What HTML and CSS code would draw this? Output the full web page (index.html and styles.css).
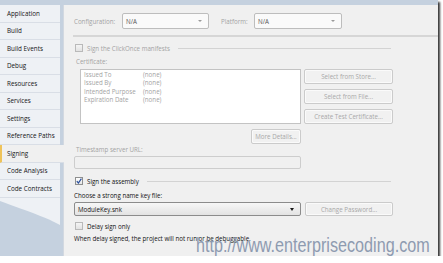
FILE: index.html
```html
<!DOCTYPE html>
<html lang="en">
<head>
    <meta charset="UTF-8">
    <title>Project Properties - Signing</title>
    <link rel="stylesheet" href="styles.css">
</head>
<body>
    <div class="shot">
        <div class="top-band"></div>
        <div class="body-row">
            <nav class="tabs">
                <div class="tab">Application</div>
                <div class="tab">Build</div>
                <div class="tab">Build Events</div>
                <div class="tab">Debug</div>
                <div class="tab">Resources</div>
                <div class="tab">Services</div>
                <div class="tab">Settings</div>
                <div class="tab">Reference Paths</div>
                <div class="tab selected">Signing</div>
                <div class="tab">Code Analysis</div>
                <div class="tab">Code Contracts</div>
                <svg class="tab-tail" width="60" height="28" viewBox="0 0 60 28">
                    <path d="M0 0 H60 V27 C48 20 30 14 0 3 Z" fill="#eef1f5"/>
                </svg>
            </nav>

            <main class="panel">
                <div class="config-row">
                    <span class="config-label">Configuration:</span>
                    <div class="combo disabled-combo config-combo">N/A<span class="arrow"></span></div>
                    <span class="platform-label">Platform:</span>
                    <div class="combo disabled-combo platform-combo">N/A<span class="arrow"></span></div>
                </div>
                <div class="separator"></div>

                <div class="group-head disabled">
                    <span class="check"></span>
                    <span>Sign the ClickOnce manifests</span>
                    <span class="rule"></span>
                </div>

                <div class="label disabled cert-label">Certificate:</div>
                <div class="cert-row">
                    <div class="cert-list">
                        <div class="cert-line"><span class="cert-key">Issued To</span><span>(none)</span></div>
                        <div class="cert-line"><span class="cert-key">Issued By</span><span>(none)</span></div>
                        <div class="cert-line"><span class="cert-key">Intended Purpose</span><span>(none)</span></div>
                        <div class="cert-line"><span class="cert-key">Expiration Date</span><span>(none)</span></div>
                    </div>
                    <div class="cert-buttons">
                        <div class="btn">Select from Store...</div>
                        <div class="btn">Select from File...</div>
                        <div class="btn">Create Test Certificate...</div>
                    </div>
                </div>
                <div class="more-row">
                    <div class="btn more-btn">More Details...</div>
                </div>

                <div class="label disabled stamp-label">Timestamp server URL:</div>
                <div class="textbox"></div>

                <div class="group-head assembly-head">
                    <span class="check checked">
                        <svg width="6" height="6" viewBox="0 0 6 6"><path d="M0.8 3.2 L2.4 5 L5.4 0.6" fill="none" stroke="#2a4f9c" stroke-width="1.2"/></svg>
                    </span>
                    <span>Sign the assembly</span>
                    <span class="rule"></span>
                </div>

                <div class="label key-label">Choose a strong name key file:</div>
                <div class="key-row">
                    <div class="combo key-combo">ModuleKey.snk<span class="arrow dark"></span></div>
                    <div class="btn password-btn">Change Password...</div>
                </div>

                <div class="check-row">
                    <span class="check"></span>
                    <span>Delay sign only</span>
                </div>
                <div class="note">When delay signed, the project will not run or be debuggable.</div>
            </main>
        </div>
        <div class="watermark">http://www.enterprisecoding.com</div>
    </div>
</body>
</html>
```

FILE: styles.css
```css
:root {
    --frame: #c5d1df;
    --tab-bg: #eef1f5;
    --panel-bg: #f0f0f0;
    --text: #111111;
    --muted: #a3a3a3;
    --line: #d3d3d3;
}

body {
    margin: 0;
    padding: 0;
    background: #ffffff;
    font-family: "Open Sans", "Noto Sans", sans-serif;
    font-size: 6.2px;
    color: var(--text);
}

.shot {
    position: relative;
    width: 438px;
    height: 256px;
    background: var(--frame);
    box-shadow: 2px 2px 2px rgba(20, 20, 20, 0.85);
    display: flex;
    flex-direction: column;
}

.top-band {
    height: 5px;
    flex: none;
}

.body-row {
    display: flex;
    flex: 1;
    min-height: 0;
}

/* left tab column */
.tabs {
    width: 60px;
    flex: none;
    display: flex;
    flex-direction: column;
    margin-right: 3px;
}

.tab {
    height: 17.5px;
    box-sizing: border-box;
    padding-left: 7px;
    display: flex;
    align-items: center;
    background: var(--tab-bg);
    border-bottom: 1px solid #d9dee6;
    font-size: 6.3px;
    font-weight: 500;
    color: #151515;
    white-space: nowrap;
}

.tab.selected {
    background: var(--panel-bg);
    border-left: 2px solid #efc35a;
    padding-left: 5px;
    margin-right: -4px;
    position: relative;
    z-index: 1;
}

.tab-tail {
    display: block;
}

/* right panel */
.panel {
    flex: 1;
    background: var(--panel-bg);
    border-left: 1px solid #d2d8e0;
    padding: 8px 0 0 10px;
    display: flex;
    flex-direction: column;
    font-weight: 500;
}

.config-row {
    display: flex;
    align-items: center;
    height: 16px;
    color: var(--muted);
}

.config-label {
    width: 48px;
}

.platform-label {
    width: 33px;
    margin-left: 12px;
}

.combo {
    box-sizing: border-box;
    position: relative;
    display: flex;
    align-items: center;
    padding-left: 3px;
    border: 1px solid #bdbdbd;
    border-radius: 2px;
    background: #fafafa;
    color: #555555;
}

.config-combo {
    width: 87px;
    height: 16px;
}

.platform-combo {
    width: 88px;
    height: 16px;
}

.arrow {
    position: absolute;
    right: 6px;
    top: 50%;
    margin-top: -1px;
    border-left: 2px solid transparent;
    border-right: 2px solid transparent;
    border-top: 2px solid #9a9a9a;
}

.arrow.dark {
    border-top-color: #1a1a1a;
    border-left-width: 2.5px;
    border-right-width: 2.5px;
    border-top-width: 3px;
}

.separator {
    height: 2px;
    background: #d6d6d6;
    margin: 6px 0 0 -1px;
}

.group-head,
.check-row {
    display: flex;
    align-items: center;
    height: 8px;
    width: 317px;
    gap: 4px;
}

.group-head {
    margin-top: 7px;
}

.group-head .rule {
    flex: 1;
    height: 1px;
    background: var(--line);
    margin-left: 4px;
}

.disabled {
    color: var(--muted);
}

.check {
    box-sizing: border-box;
    width: 8px;
    height: 8px;
    margin-left: 1px;
    border: 1px solid #b9b9b9;
    background: linear-gradient(#f4f4f4, #e2e2e2);
    display: flex;
    align-items: center;
    justify-content: center;
    flex: none;
}

.check.checked {
    border-color: #8e8f8f;
    background: linear-gradient(#ffffff, #e6e6e6);
}

.label {
    height: 8px;
    line-height: 8px;
}

.cert-label {
    margin: 6px 0 0 2px;
}

.cert-row {
    display: flex;
    margin-top: 3px;
    gap: 3px;
    padding-left: 6px;
}

.cert-list {
    box-sizing: border-box;
    width: 221px;
    height: 55px;
    background: #ffffff;
    border: 1px solid #c3c3c3;
    padding: 1px 0 0 3px;
    color: var(--muted);
}

.cert-line {
    display: flex;
    height: 8.3px;
    line-height: 8.3px;
}

.cert-key {
    width: 59px;
}

.cert-buttons {
    display: flex;
    flex-direction: column;
    gap: 5px;
}

.btn {
    box-sizing: border-box;
    height: 15px;
    width: 89px;
    display: flex;
    align-items: center;
    justify-content: center;
    border: 1px solid #cbcbcb;
    border-radius: 2px;
    background: #f1f1f1;
    box-shadow: inset 0 0 0 1px #fafafa;
    color: #a8a8a8;
    white-space: nowrap;
}

.more-row {
    display: flex;
    justify-content: flex-end;
    width: 227px;
    margin-top: 5px;
}

.more-btn {
    width: 50px;
}

.stamp-label {
    margin: 2px 0 0 2px;
}

.textbox {
    box-sizing: border-box;
    width: 227px;
    height: 13px;
    margin-top: 2px;
    border: 1px solid #cdcdcd;
    border-radius: 2px;
    background: #f0f0f0;
}

.assembly-head {
    margin-top: 8px;
}

.key-label {
    margin-top: 7px;
}

.key-row {
    display: flex;
    gap: 4px;
    margin-top: 2px;
}

.key-combo {
    width: 227px;
    height: 14px;
    border-color: #8c8c8c;
    background: linear-gradient(#f7f7f7, #e3e3e3);
    color: #111111;
}

.password-btn {
    width: 88px;
    height: 14px;
}

.check-row {
    margin-top: 6px;
}

.note {
    margin-top: 5px;
    height: 8px;
    line-height: 8px;
}

/* site watermark laid over the screenshot */
.watermark {
    position: absolute;
    left: 196px;
    top: 233px;
    font-family: "Liberation Sans", Arial, sans-serif;
    font-size: 21px;
    color: #8e9bb0;
    transform: scaleX(0.77);
    transform-origin: left top;
    white-space: nowrap;
}
```
